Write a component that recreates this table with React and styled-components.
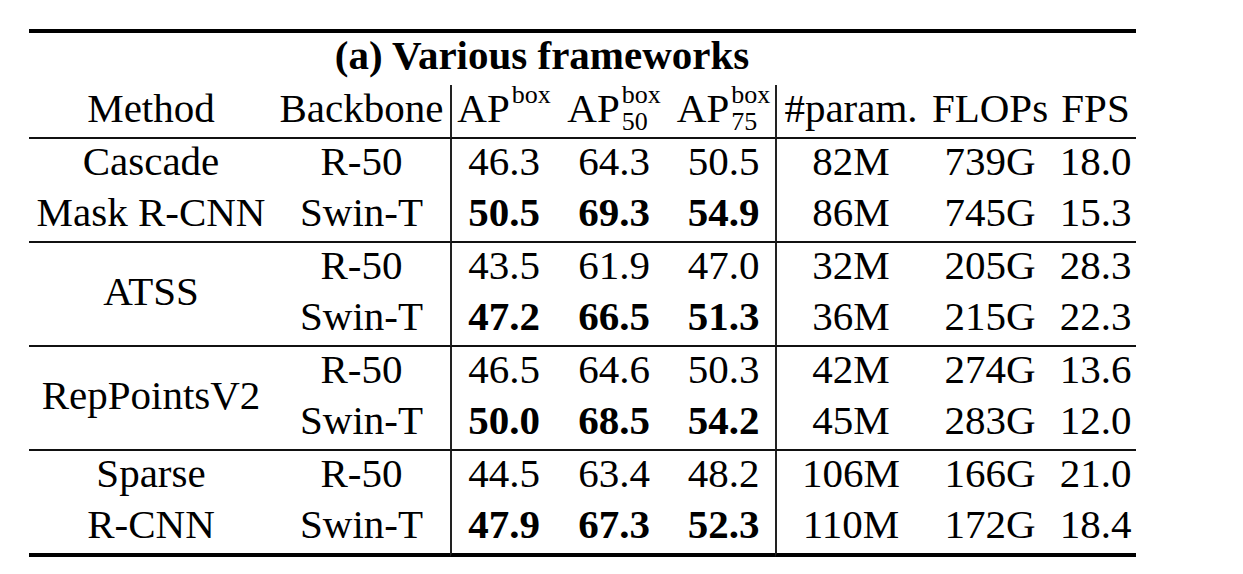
import React from 'react';
import styled, { createGlobalStyle } from 'styled-components';

const GlobalStyle = createGlobalStyle`
    html, body {
        margin: 0;
        padding: 0;
        background: #ffffff;
    }
    body {
        font-family: "Liberation Serif", "Times New Roman", serif;
        color: #000000;
    }
`;

const Page = styled.div`
    padding: 29px 0 0 29px;
    box-sizing: border-box;
`;

const Table = styled.table`
    width: 1107px;
    table-layout: fixed;
    border-collapse: separate;
    border-spacing: 0;
    font-size: 41px;
`;

const TitleCell = styled.td`
    border-top: 4px solid #000;
    padding: 0 0 8px 0;
    line-height: 44px;
    text-align: center;
    font-weight: bold;
`;

const HeadCell = styled.th`
    font-weight: normal;
    padding: 0 0 6px 0;
    line-height: 46px;
    text-align: center;
    white-space: nowrap;
    border-bottom: 2px solid #111;
    border-left: ${p => (p.$divider ? '2px solid #222' : 'none')};
`;

const Cell = styled.td`
    padding: 0 0 6px 0;
    line-height: 45px;
    text-align: center;
    white-space: nowrap;
    vertical-align: middle;
    font-weight: ${p => (p.$bold ? 'bold' : 'normal')};
    border-left: ${p => (p.$divider ? '2px solid #222' : 'none')};
    border-bottom: ${p => (p.$rule === 'thick' ? '4px solid #000' : p.$rule === 'thin' ? '2px solid #111' : 'none')};
`;

const Sup = styled.sup`
    font-size: 26px;
    line-height: 0;
    vertical-align: 19px;
    margin-left: 2px;
`;

const Scripts = styled.span`
    display: inline-block;
    vertical-align: -8px;
    margin: -8px 0 -6px 2px;
    font-size: 26px;
    line-height: 27px;
    text-align: left;
`;

const ScriptLine = styled.span`
    display: block;
`;

const widths = [244, 177, 106, 116, 103, 150, 130, 81];

const groups = [
    {
        method: ['Cascade', 'Mask R-CNN'],
        rows: [
            ['R-50', '46.3', '64.3', '50.5', '82M', '739G', '18.0'],
            ['Swin-T', '50.5', '69.3', '54.9', '86M', '745G', '15.3'],
        ],
    },
    {
        method: 'ATSS',
        rows: [
            ['R-50', '43.5', '61.9', '47.0', '32M', '205G', '28.3'],
            ['Swin-T', '47.2', '66.5', '51.3', '36M', '215G', '22.3'],
        ],
    },
    {
        method: 'RepPointsV2',
        rows: [
            ['R-50', '46.5', '64.6', '50.3', '42M', '274G', '13.6'],
            ['Swin-T', '50.0', '68.5', '54.2', '45M', '283G', '12.0'],
        ],
    },
    {
        method: ['Sparse', 'R-CNN'],
        rows: [
            ['R-50', '44.5', '63.4', '48.2', '106M', '166G', '21.0'],
            ['Swin-T', '47.9', '67.3', '52.3', '110M', '172G', '18.4'],
        ],
    },
];

const AP = ({ sub }) => (
    <>
        AP
        {sub ? (
            <Scripts>
                <ScriptLine>box</ScriptLine>
                <ScriptLine>{sub}</ScriptLine>
            </Scripts>
        ) : (
            <Sup>box</Sup>
        )}
    </>
);

export default function App() {
    return (
        <Page>
            <GlobalStyle />
            <Table>
                <colgroup>
                    {widths.map((w, i) => <col key={i} style={{ width: w }} />)}
                </colgroup>
                <thead>
                    <tr>
                        <TitleCell colSpan={7}>(a) Various frameworks</TitleCell>
                        <TitleCell />
                    </tr>
                    <tr>
                        <HeadCell>Method</HeadCell>
                        <HeadCell>Backbone</HeadCell>
                        <HeadCell $divider><AP /></HeadCell>
                        <HeadCell><AP sub="50" /></HeadCell>
                        <HeadCell><AP sub="75" /></HeadCell>
                        <HeadCell $divider>#param.</HeadCell>
                        <HeadCell>FLOPs</HeadCell>
                        <HeadCell>FPS</HeadCell>
                    </tr>
                </thead>
                <tbody>
                    {groups.map((g, gi) => {
                        const last = gi === groups.length - 1;
                        const rule = last ? 'thick' : 'thin';
                        return g.rows.map((r, ri) => {
                            const bottom = ri === 1 ? rule : undefined;
                            const swin = r[0] === 'Swin-T';
                            let methodCell = null;
                            if (Array.isArray(g.method)) {
                                methodCell = <Cell $rule={bottom}>{g.method[ri]}</Cell>;
                            } else if (ri === 0) {
                                methodCell = <Cell rowSpan={2} $rule={rule}>{g.method}</Cell>;
                            }
                            return (
                                <tr key={gi + '-' + ri}>
                                    {methodCell}
                                    <Cell $rule={bottom}>{r[0]}</Cell>
                                    <Cell $rule={bottom} $divider $bold={swin}>{r[1]}</Cell>
                                    <Cell $rule={bottom} $bold={swin}>{r[2]}</Cell>
                                    <Cell $rule={bottom} $bold={swin}>{r[3]}</Cell>
                                    <Cell $rule={bottom} $divider>{r[4]}</Cell>
                                    <Cell $rule={bottom}>{r[5]}</Cell>
                                    <Cell $rule={bottom}>{r[6]}</Cell>
                                </tr>
                            );
                        });
                    })}
                </tbody>
            </Table>
        </Page>
    );
}
